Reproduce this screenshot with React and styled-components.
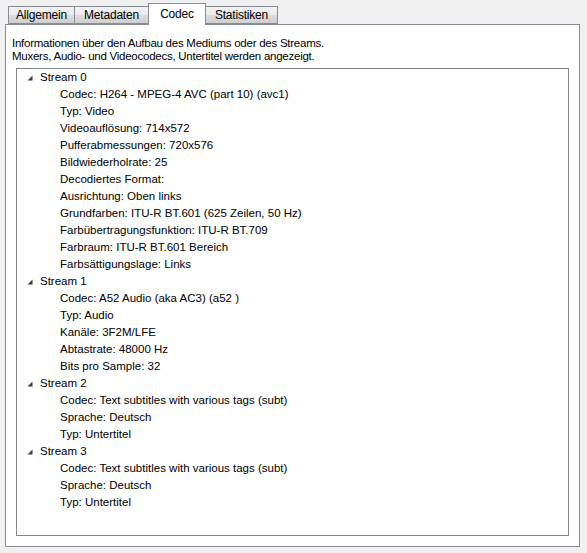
import { createGlobalStyle, styled } from "styled-components";

const GlobalStyle = createGlobalStyle`
  html, body {
    margin: 0;
    padding: 0;
    background: #f0f0f0;
  }
  body {
    font-family: "Liberation Sans", "DejaVu Sans", sans-serif;
    font-size: 11.5px;
    color: #000;
  }
`;

const tabs = [
  { label: "Allgemein", width: 67 },
  { label: "Metadaten", width: 75 },
  { label: "Codec", width: 58, active: true },
  { label: "Statistiken", width: 73 },
];

const streams = [
  {
    name: "Stream 0",
    items: [
      "Codec: H264 - MPEG-4 AVC (part 10) (avc1)",
      "Typ: Video",
      "Videoauflösung: 714x572",
      "Pufferabmessungen: 720x576",
      "Bildwiederholrate: 25",
      "Decodiertes Format:",
      "Ausrichtung: Oben links",
      "Grundfarben: ITU-R BT.601 (625 Zeilen, 50 Hz)",
      "Farbübertragungsfunktion: ITU-R BT.709",
      "Farbraum: ITU-R BT.601 Bereich",
      "Farbsättigungslage: Links",
    ],
  },
  {
    name: "Stream 1",
    items: [
      "Codec: A52 Audio (aka AC3) (a52 )",
      "Typ: Audio",
      "Kanäle: 3F2M/LFE",
      "Abtastrate: 48000 Hz",
      "Bits pro Sample: 32",
    ],
  },
  {
    name: "Stream 2",
    items: [
      "Codec: Text subtitles with various tags (subt)",
      "Sprache: Deutsch",
      "Typ: Untertitel",
    ],
  },
  {
    name: "Stream 3",
    items: [
      "Codec: Text subtitles with various tags (subt)",
      "Sprache: Deutsch",
      "Typ: Untertitel",
    ],
  },
];

function App() {
  return (
    <>
      <GlobalStyle />
      <Window>
        <TabBar>
          {tabs.map((t) => (
            <Tab key={t.label} $active={t.active} $width={t.width}>
              {t.label}
            </Tab>
          ))}
        </TabBar>
        <Pane>
          <Description>
            Informationen über den Aufbau des Mediums oder des Streams.
            <br />
            Muxers, Audio- und Videocodecs, Untertitel werden angezeigt.
          </Description>
          <Tree>
            {streams.map((s) => (
              <div key={s.name}>
                <Row $level={0}>
                  <Expander>
                    <svg width="6" height="6" viewBox="0 0 6 6">
                      <polygon points="5.5,0.5 5.5,5.5 0.5,5.5" fill="#404040" />
                    </svg>
                  </Expander>
                  {s.name}
                </Row>
                {s.items.map((it, i) => (
                  <Row key={i} $level={1}>
                    {it}
                  </Row>
                ))}
              </div>
            ))}
          </Tree>
        </Pane>
      </Window>
    </>
  );
}

export default App;

const Window = styled.div`
  padding: 3px 0 0 5px;
  width: 575px;
`;

const TabBar = styled.div`
  display: flex;
  align-items: flex-end;
  height: 21px;
  padding-left: 3px;
  position: relative;
  z-index: 1;
`;

const Tab = styled.div`
  box-sizing: border-box;
  width: ${(p) => p.$width}px;
  height: ${(p) => (p.$active ? "22px" : "18px")};
  margin-bottom: ${(p) => (p.$active ? "-1px" : "0")};
  margin-right: -1px;
  border: 1px solid #898c95;
  border-bottom: ${(p) => (p.$active ? "none" : "1px solid #898c95")};
  background: ${(p) =>
    p.$active ? "#ffffff" : "linear-gradient(#f2f2f2, #ebebeb 50%, #dddddd 51%, #cfcfcf)"};
  display: flex;
  align-items: ${(p) => (p.$active ? "flex-start" : "center")};
  padding-top: ${(p) => (p.$active ? "3px" : "0")};
  justify-content: center;
  font-size: 12px;
  letter-spacing: -0.2px;
  white-space: nowrap;
`;

const Pane = styled.div`
  box-sizing: border-box;
  height: 523px;
  border: 1px solid #898c95;
  background: #ffffff;
  padding: 12px 10px 11px 10px;
`;

const Description = styled.div`
  line-height: 13px;
  margin-left: -4px;
  letter-spacing: -0.25px;
`;

const Tree = styled.div`
  box-sizing: border-box;
  margin-top: 5px;
  height: 468px;
  border: 1px solid #828790;
  background: #ffffff;
`;

const Row = styled.div`
  height: 17px;
  line-height: 17px;
  display: flex;
  align-items: center;
  padding-left: ${(p) => (p.$level === 0 ? "10px" : "43px")};
  white-space: nowrap;
`;

const Expander = styled.span`
  width: 13px;
  height: 17px;
  display: inline-flex;
  align-items: center;
  padding-top: 1px;
  box-sizing: border-box;
`;
